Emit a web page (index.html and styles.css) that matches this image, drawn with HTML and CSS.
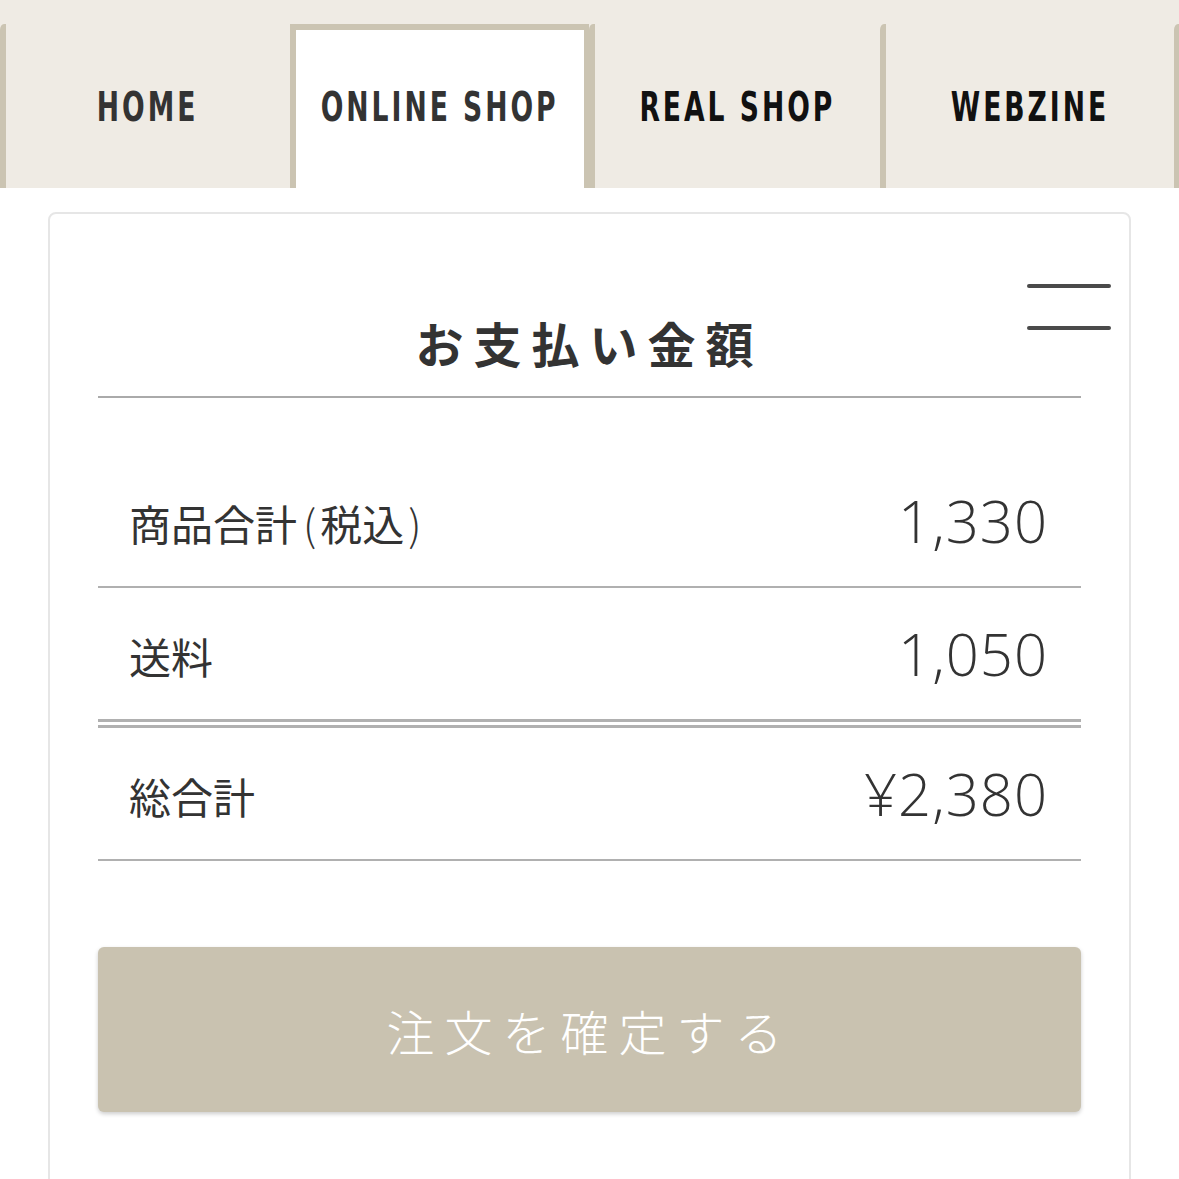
FILE: index.html
```
<!DOCTYPE html>
<html lang="ja">
<head>
    <meta charset="UTF-8">
    <meta name="viewport" content="width=device-width, initial-scale=1.0">
    <title>お支払い金額</title>
    <link rel="stylesheet" href="styles.css">
</head>
<body>
    <nav class="tabs">
        <a class="tab"><span class="tab-label">HOME</span></a>
        <a class="tab active"><span class="tab-label">ONLINE SHOP</span></a>
        <a class="tab"><span class="tab-label dark">REAL SHOP</span></a>
        <a class="tab"><span class="tab-label dark">WEBZINE</span></a>
        <a class="tab"></a>
    </nav>

    <div class="page">
        <div class="card">
            <button class="menu-button" aria-label="menu">
                <span class="menu-line"></span>
                <span class="menu-line"></span>
            </button>

            <h1 class="card-title">お支払い金額</h1>

            <div class="summary">
                <div class="summary-row first">
                    <div class="row-label">商品合計<span class="paren open">(</span>税込<span class="paren close">)</span></div>
                    <div class="row-value">1,330</div>
                </div>
                <div class="summary-row double">
                    <div class="row-label">送料</div>
                    <div class="row-value">1,050</div>
                </div>
                <div class="summary-row">
                    <div class="row-label">総合計</div>
                    <div class="row-value">¥2,380</div>
                </div>
            </div>

            <button class="confirm-button">注文を確定する</button>
        </div>
    </div>
</body>
</html>
```

FILE: styles.css
```
body {
    margin: 0;
    background-color: #ffffff;
    font-family: "Noto Sans CJK JP", "Noto Sans", sans-serif;
    color: #333333;
}

.tabs {
    display: grid;
    grid-template-columns: 290px 299px 291px 294px 1fr;
    height: 188px;
    padding-top: 24px;
    box-sizing: border-box;
    background-color: #efebe4;
    overflow: hidden;
}

.tab {
    display: flex;
    align-items: center;
    justify-content: center;
    border-left: 6px solid #cbc4b2;
    border-top-left-radius: 4px 6px;
    background-color: #efebe4;
    text-decoration: none;
    white-space: nowrap;
}

.tab.active {
    background-color: #ffffff;
    border-top: 6px solid #cbc4b2;
    border-right: 5px solid #cbc4b2;
    border-radius: 0;
}

.tab-label {
    display: inline-block;
    font-family: "DejaVu Sans Condensed", "Liberation Sans", sans-serif;
    font-stretch: condensed;
    font-weight: bold;
    font-size: 40px;
    letter-spacing: 4px;
    color: #333333;
    transform: scaleX(0.74);
    margin-top: 2px;
}

.tab.active .tab-label {
    margin-top: -4px;
}

.tab-label.dark {
    color: #111111;
}

.page {
    padding: 24px 48px 0;
}

.card {
    position: relative;
    border: 2px solid #e6e6e6;
    border-radius: 8px;
    padding: 0 48px 80px;
    min-height: 1000px;
}

.menu-button {
    position: absolute;
    top: 70px;
    right: 18px;
    width: 84px;
    height: 46px;
    padding: 0;
    border: none;
    background: none;
    display: flex;
    flex-direction: column;
    justify-content: space-between;
}

.menu-line {
    display: block;
    height: 4px;
    background-color: #4a4a4a;
    border-radius: 2px;
}

.card-title {
    margin: 0;
    padding: 96px 0 22px;
    text-align: center;
    font-size: 48px;
    font-weight: bold;
    letter-spacing: 10px;
    line-height: 64px;
    color: #333333;
    border-bottom: 2px solid #aaaaaa;
}

.summary-row {
    display: flex;
    align-items: center;
    justify-content: space-between;
    height: 131px;
    padding: 0 33px 0 31px;
    border-bottom: 2px solid #b0b0b0;
}

.summary-row.first {
    margin-top: 57px;
}

.summary-row.double {
    border-bottom: 9px double #b0b0b0;
}

.row-label {
    font-size: 42px;
    font-weight: 400;
    color: #333333;
    margin-top: 4px;
}

.paren {
    font-weight: 300;
}

.paren.open {
    margin: 0 4px 0 6px;
}

.paren.close {
    margin-left: 4px;
}

.row-value {
    font-family: "Open Sans", "Lato", sans-serif;
    font-weight: 300;
    font-size: 58px;
    color: #333333;
    letter-spacing: 1px;
}

.confirm-button {
    display: block;
    width: 100%;
    height: 165px;
    margin-top: 86px;
    border: none;
    border-radius: 6px;
    background-color: #c9c2b0;
    box-shadow: 0 2px 4px rgba(0, 0, 0, 0.2);
    color: #ffffff;
    font-family: "Noto Sans CJK JP", sans-serif;
    font-size: 48px;
    font-weight: 300;
    letter-spacing: 10px;
}
```
